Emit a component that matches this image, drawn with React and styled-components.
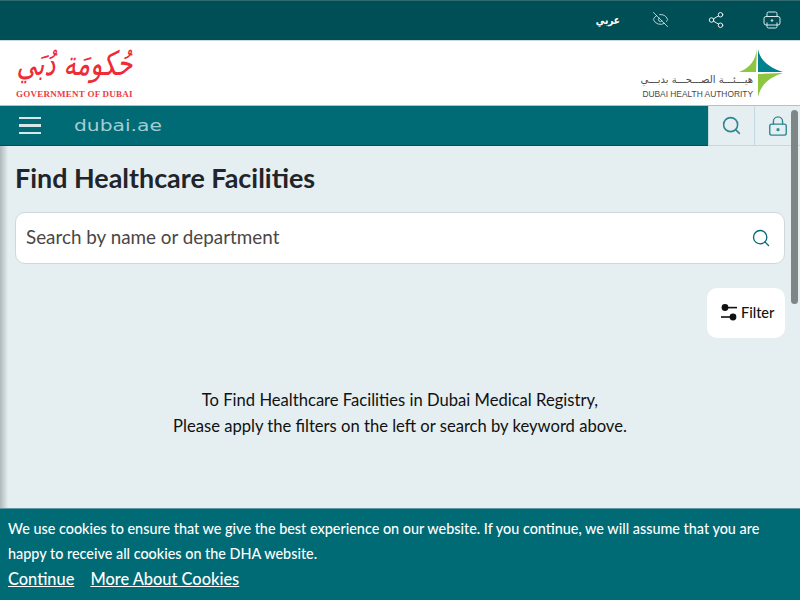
import React from 'react';
import styled, { createGlobalStyle } from 'styled-components';
import { Search, Share2, EyeOff, LockKeyhole } from 'lucide-react';

const GlobalStyle = createGlobalStyle`
  html, body {
    margin: 0;
    padding: 0;
    height: 100%;
    overflow: hidden;
    background: #e5eef1;
    font-family: Lato, "Open Sans", sans-serif;
  }
  * { box-sizing: border-box; }
`;

const Page = styled.div`
  position: relative;
  width: 800px;
  height: 600px;
  overflow: hidden;
  background: #e5eef1;
`;

const TopBar = styled.div`
  display: flex;
  align-items: center;
  justify-content: flex-end;
  gap: 38px;
  height: 40px;
  padding: 0 19px 2px 0;
  background: #004f56;
  border-top: 1px solid #2f6a70;
  color: #fff;
`;

const TopLang = styled.div`
  margin-right: -6px;
  font-family: "DejaVu Sans", sans-serif;
  font-size: 11.5px;
  font-weight: bold;
  transform: scaleX(0.78);
  transform-origin: right center;
`;

const LogoBar = styled.div`
  display: flex;
  align-items: flex-start;
  justify-content: space-between;
  height: 66px;
  background: #fff;
  border-top: 1px solid #c6dadd;
  border-bottom: 1px solid #a9c6cb;
  padding: 0 16px;
`;

const GovLogo = styled.div`
  display: flex;
  flex-direction: column;
  align-items: center;
  width: 117px;
  padding-top: 3px;
`;

const GovArabic = styled.div`
  height: 44px;
  font-family: "DejaVu Sans", sans-serif;
  font-size: 25px;
  line-height: 42px;
  font-style: italic;
  color: #ee2b36;
  white-space: nowrap;
  transform: scaleY(1.35);
`;

const GovLatin = styled.div`
  margin-top: 1px;
  font-family: "Liberation Serif", serif;
  font-size: 9px;
  font-weight: bold;
  line-height: 10px;
  letter-spacing: 0.25px;
  color: #ee3a44;
  white-space: nowrap;
`;

const DhaLogo = styled.div`
  display: flex;
  align-items: flex-start;
  margin-top: 7px;
`;

const DhaText = styled.div`
  display: flex;
  flex-direction: column;
  align-items: flex-end;
  width: 110px;
  margin-top: 24px;
  margin-right: -15px;
`;

const DhaArabic = styled.div`
  font-family: "DejaVu Sans", sans-serif;
  font-size: 10px;
  line-height: 16px;
  color: #4b4b4b;
  white-space: nowrap;
`;

const DhaLatin = styled.div`
  margin-top: 1px;
  font-family: "Liberation Sans", sans-serif;
  font-size: 8.4px;
  line-height: 11px;
  color: #44484a;
  white-space: nowrap;
`;

const NavBar = styled.div`
  display: flex;
  align-items: stretch;
  height: 40px;
`;

const NavMain = styled.div`
  display: flex;
  align-items: center;
  flex: 1;
  padding-left: 19px;
  background: #006a75;
  border-bottom: 1px solid #004f56;
`;

const Burger = styled.div`
  display: flex;
  flex-direction: column;
  gap: 5px;
  width: 22px;
  margin-right: 33px;
  span {
    height: 2.5px;
    background: #d6e8ea;
  }
`;

const SiteName = styled.div`
  font-family: "DejaVu Sans", sans-serif;
  font-size: 15px;
  color: #a4cdd1;
  transform: scaleX(1.35);
  transform-origin: left center;
`;

const NavButton = styled.div`
  display: flex;
  align-items: center;
  justify-content: center;
  width: 46px;
  color: #2d8791;
  border-left: 1px solid #c3d9dd;
  border-bottom: 1px solid #c3d9dd;
  background: #e5eef1;
`;

const Content = styled.main`
  padding: 17px 15px 0;
`;

const Title = styled.h1`
  margin: 0;
  font-size: 26.9px;
  line-height: 30px;
  font-weight: 700;
  color: #212529;
`;

const SearchBox = styled.div`
  display: flex;
  align-items: center;
  justify-content: space-between;
  height: 52px;
  margin-top: 19px;
  padding: 0 13px 0 10px;
  background: #fff;
  border: 1px solid #cfd9db;
  border-radius: 10px;
  font-size: 18.85px;
  color: #4c4646;
`;

const SearchLabel = styled.span`
  margin-bottom: 3px;
`;

const FilterRow = styled.div`
  display: flex;
  justify-content: flex-end;
  margin-top: 24px;
`;

const FilterButton = styled.div`
  display: flex;
  align-items: center;
  gap: 4px;
  width: 78px;
  height: 50px;
  padding: 0 0 2px 14px;
  background: #fff;
  border-radius: 10px;
  font-size: 14.5px;
  font-weight: 500;
  color: #111;
`;

const Message = styled.p`
  margin: 49px 0 0;
  text-align: center;
  font-size: 16.6px;
  line-height: 26px;
  color: #111;
`;

const CookieBar = styled.div`
  position: absolute;
  left: 0;
  right: 0;
  bottom: 0;
  height: 92px;
  padding: 7px 8px 0;
  background: #006a75;
  border-top: 1px solid #5d9aa2;
  color: #fff;
  font-size: 14.4px;
  font-weight: 500;
  line-height: 25px;
`;

const CookieLinks = styled.div`
  display: flex;
  gap: 16px;
  font-size: 16.4px;
`;

const CookieLink = styled.a`
  color: #fff;
  text-decoration: underline;
`;

const EdgeShade = styled.div`
  position: absolute;
  left: 0;
  top: 146px;
  bottom: 92px;
  width: 8px;
  background: linear-gradient(to right, #aeb9bb, #e5eef1);
`;

const ScrollThumb = styled.div`
  position: absolute;
  top: 110px;
  right: 2px;
  width: 7px;
  height: 194px;
  border-radius: 4px;
  background: #7f8686;
`;

const DhaMark = () => (
  <svg width="46" height="50" viewBox="0 0 46 50">
    <path d="M19 0 C18 12 12 20 1 24 L18 24 Z" fill="#8dc63f" />
    <path d="M20 1 C22 12 30 19 45 24 L20 24 Z" fill="#00818f" />
    <path d="M20 26 L45 25 C32 29 23 36 20 49 Z" fill="#8dc63f" />
  </svg>
);

const PrintIcon = () => (
  <svg width="18" height="18" viewBox="0 0 18 18" fill="none" stroke="#d9e8ea" strokeWidth="1">
    <path d="M4 5.5 V2.5 Q4 1 5.5 1 H12.5 Q14 1 14 2.5 V5.5" />
    <rect x="1" y="5.5" width="16" height="8.5" rx="2" />
    <path d="M4 11.5 V15.5 Q4 17 5.5 17 H12.5 Q14 17 14 15.5 V11.5" />
    <circle cx="9" cy="9.5" r="0.8" fill="#d9e8ea" />
  </svg>
);

const FilterIcon = () => (
  <svg width="16" height="17" viewBox="0 0 16 17" fill="#111">
    <circle cx="4" cy="3.5" r="3.4" />
    <rect x="4" y="2.8" width="12" height="1.6" />
    <circle cx="12" cy="13" r="3.4" />
    <rect x="0" y="12.2" width="12" height="1.6" />
  </svg>
);

export default function App() {
  return (
    <Page>
      <GlobalStyle />
      <TopBar>
        <TopLang>عربي</TopLang>
        <EyeOff size={17} strokeWidth={1} />
        <Share2 size={18} strokeWidth={1.2} />
        <PrintIcon />
      </TopBar>
      <LogoBar>
        <GovLogo>
          <GovArabic>حُكومَة دُبَي</GovArabic>
          <GovLatin>GOVERNMENT OF DUBAI</GovLatin>
        </GovLogo>
        <DhaLogo>
          <DhaText>
            <DhaArabic>هيـــئـــة الصـــحـــة بدبـــي</DhaArabic>
            <DhaLatin>DUBAI HEALTH AUTHORITY</DhaLatin>
          </DhaText>
          <DhaMark />
        </DhaLogo>
      </LogoBar>
      <NavBar>
        <NavMain>
          <Burger><span /><span /><span /></Burger>
          <SiteName>dubai.ae</SiteName>
        </NavMain>
        <NavButton><Search size={21} strokeWidth={1.8} /></NavButton>
        <NavButton><LockKeyhole size={22} strokeWidth={1.5} /></NavButton>
      </NavBar>
      <Content>
        <Title>Find Healthcare Facilities</Title>
        <SearchBox>
          <SearchLabel>Search by name or department</SearchLabel>
          <Search size={20} strokeWidth={1.6} color="#006a75" />
        </SearchBox>
        <FilterRow>
          <FilterButton><FilterIcon />Filter</FilterButton>
        </FilterRow>
        <Message>
          To Find Healthcare Facilities in Dubai Medical Registry,<br />
          Please apply the filters on the left or search by keyword above.
        </Message>
      </Content>
      <EdgeShade />
      <ScrollThumb />
      <CookieBar>
        We use cookies to ensure that we give the best experience on our website. If you continue, we will assume that you are happy to receive all cookies on the DHA website.
        <CookieLinks>
          <CookieLink>Continue</CookieLink>
          <CookieLink>More About Cookies</CookieLink>
        </CookieLinks>
      </CookieBar>
    </Page>
  );
}
